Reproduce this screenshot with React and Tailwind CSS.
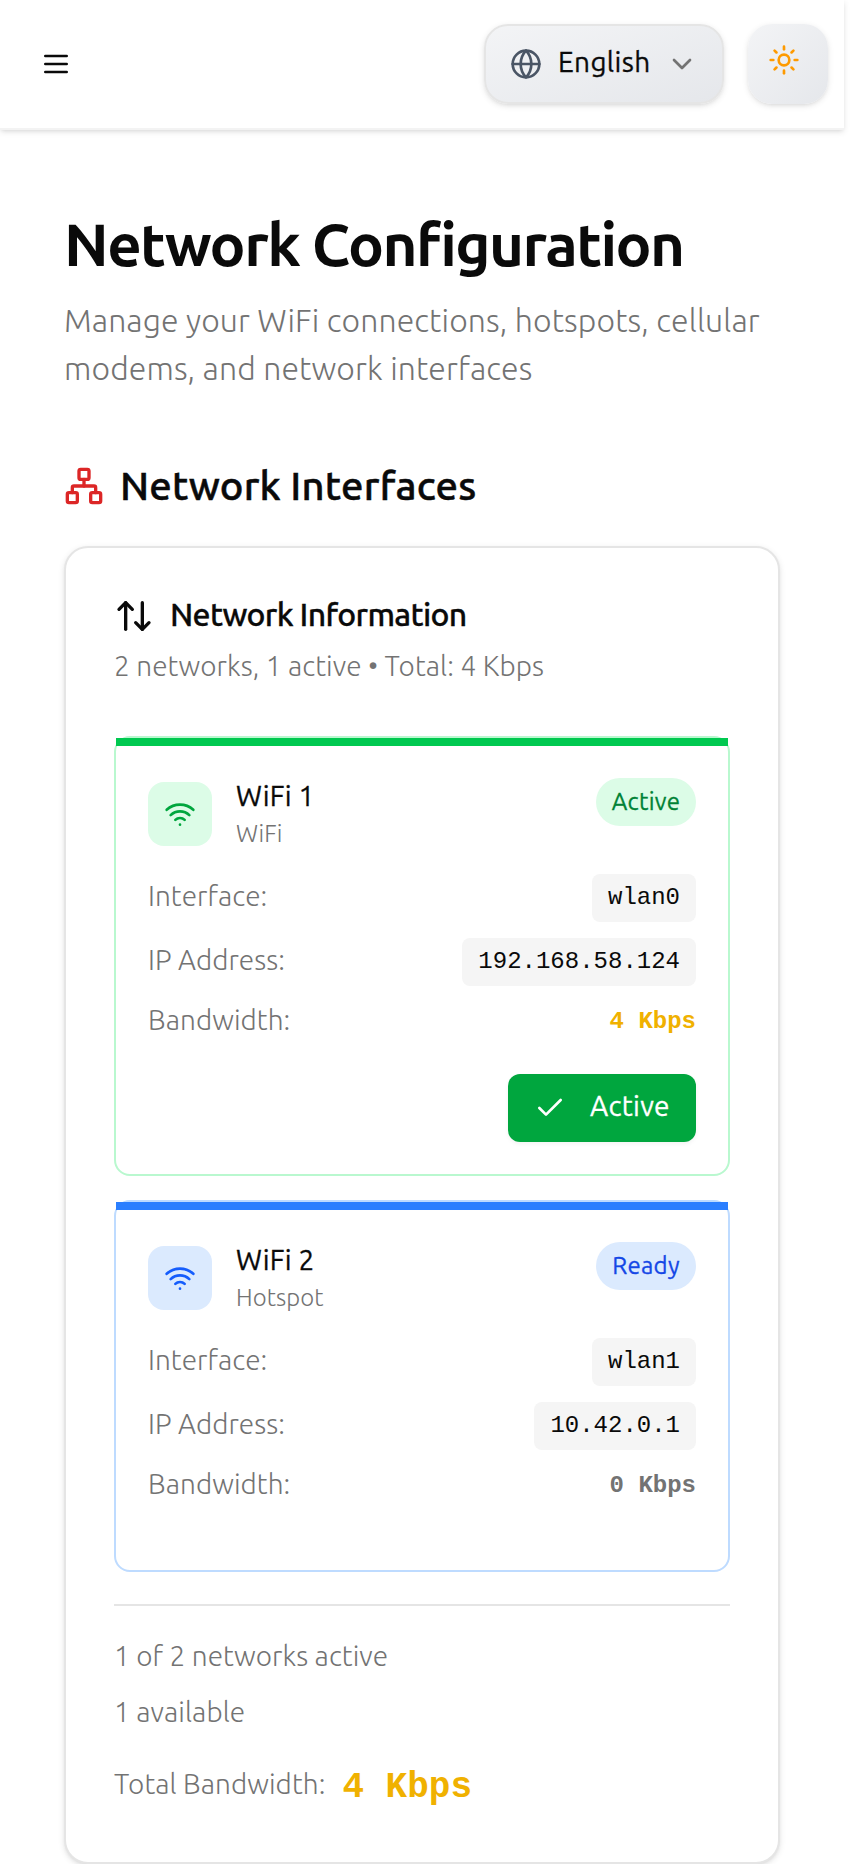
import React from "react";
import { ArrowUpDown, Check, ChevronDown, Globe, Network, Wifi, Sun } from "lucide-react";

function MenuIcon() {
  return (
    <svg className="size-8" viewBox="0 0 24 24" fill="none" stroke="currentColor" strokeWidth="2" strokeLinecap="round">
      <path d="M4 6h16M4 12h16M4 18h16" />
    </svg>
  );
}

const tones = {
  green: {
    border: "border-[#b9f8cf]",
    bar: "bg-[#00c950]",
    tile: "bg-[#dcfce7] text-[#00a63e]",
    badge: "bg-[#dcfce7] text-[#008236]",
    value: "text-[#f0b100]",
  },
  blue: {
    border: "border-[#bedbff]",
    bar: "bg-[#2b7fff]",
    tile: "bg-[#dbeafe] text-[#155dfc]",
    badge: "bg-[#dbeafe] text-[#1447e6]",
    value: "text-[#737373]",
  },
};

function CodeRow({ label, value }) {
  return (
    <div className="flex items-center justify-between">
      <span className="pb-1 leading-9 text-[#737373]">{label}</span>
      <code className="flex h-12 items-center rounded-lg bg-[#f5f5f5] px-4 font-['Liberation_Mono',monospace] text-2xl font-normal leading-8 tracking-normal">
        {value}
      </code>
    </div>
  );
}

function NetworkCard({ tone, name, kind, status, iface, ip, bandwidth, active }) {
  const t = tones[tone];
  return (
    <div className={`rounded-2xl border-2 ${t.border}`}>
      <div className={`h-2 ${t.bar}`} />
      <div className="p-8">
        <div className="flex items-start justify-between">
          <div className="flex items-center gap-6">
            <div className={`flex size-16 items-center justify-center rounded-2xl ${t.tile}`}>
              <Wifi className="size-8" />
            </div>
            <div>
              <h4 className="pb-1 font-normal leading-9 tracking-[0.25px] [-webkit-text-stroke:0.3px]">{name}</h4>
              <p className="text-2xl leading-8 text-[#737373]">{kind}</p>
            </div>
          </div>
          <span className={`flex h-12 w-[100px] items-center justify-center rounded-full text-2xl font-normal tracking-[0.3px] [-webkit-text-stroke:0.3px] ${t.badge}`}>
            {status}
          </span>
        </div>
        <div className="mt-6 flex flex-col gap-4">
          <CodeRow label="Interface:" value={iface} />
          <CodeRow label="IP Address:" value={ip} />
          <div className="flex items-center justify-between">
            <span className="pb-1 leading-9 text-[#737373]">Bandwidth:</span>
            <span className={`font-['Liberation_Mono',monospace] text-2xl font-bold leading-8 tracking-normal ${t.value}`}>{bandwidth}</span>
          </div>
        </div>
        <div className="mt-8 flex justify-end">
          {active && (
            <button className="flex h-[68px] w-[188px] items-center gap-6 rounded-xl bg-[#00a63e] pl-[26px] font-normal tracking-[0.3px] text-white shadow-[0_2px_4px_rgb(0_0_0/0.05)]">
              <Check className="size-8" />
              <span className="pb-1 leading-9 [-webkit-text-stroke:0.3px]">{status}</span>
            </button>
          )}
        </div>
      </div>
    </div>
  );
}

export default function App() {
  return (
    <div className="min-h-[1864px] w-full bg-white font-['Ubuntu','Open_Sans',sans-serif] text-[28px] font-light tracking-[0.06px] text-[#0a0a0a]">
      <div className="w-[844px]">
        <header className="flex h-[130px] items-center justify-between border-b-2 border-[#f3f3f3] bg-white pl-10 pr-4 shadow-[0_2px_6px_rgb(0_0_0/0.1),0_2px_4px_-2px_rgb(0_0_0/0.1)]">
          <button aria-label="Menu">
            <MenuIcon />
          </button>
          <div className="flex gap-6">
            <button className="flex h-20 w-60 items-center gap-4 rounded-3xl border-2 border-[#e5e5e5] bg-linear-to-br from-[#f3f4f6] to-[#e5e7eb] px-6 font-normal tracking-[0.35px] shadow-[0_2px_6px_rgb(0_0_0/0.1),0_2px_4px_-2px_rgb(0_0_0/0.1)]">
              <Globe className="size-8 shrink-0 text-[#4a5565]" />
              <span className="min-w-0 flex-1 pb-1 text-left leading-9 [-webkit-text-stroke:0.3px]">English</span>
              <ChevronDown className="size-8 shrink-0 text-[#737373]" />
            </button>
            <button aria-label="Theme" className="flex size-20 items-start rounded-3xl bg-linear-to-br from-[#f3f4f6] to-[#e5e7eb] pl-5 pt-5 shadow-[0_2px_6px_rgb(0_0_0/0.1),0_2px_4px_-2px_rgb(0_0_0/0.1)]">
              <Sun className="size-8 text-[#fe9a00]" />
            </button>
          </div>
        </header>

        <main className="px-16 pt-[78px]">
          <h1 className="text-[60px] font-bold leading-[72px] tracking-[-1.6px]">Network Configuration</h1>
          <p className="mt-4 text-[32px] leading-12 tracking-[0.1px] text-[#737373]">
            Manage your WiFi connections, hotspots, cellular modems, and network interfaces
          </p>

          <div className="mt-[66px] flex items-center gap-4">
            <Network className="size-10 text-[#dc2626]" />
            <h2 className="text-[40px] font-medium leading-14 tracking-[0.17px] [-webkit-text-stroke:0.5px]">Network Interfaces</h2>
          </div>

          <section className="mt-8 rounded-3xl border-2 border-[#e5e5e5] bg-white p-12 shadow-[0_2px_6px_rgb(0_0_0/0.1),0_2px_4px_-2px_rgb(0_0_0/0.1)]">
            <div className="flex items-center gap-4">
              <ArrowUpDown className="size-10" />
              <h3 className="pb-1 text-[32px] font-medium leading-9 tracking-[-0.7px] [-webkit-text-stroke:0.3px]">Network Information</h3>
            </div>
            <p className="mt-3 pb-1 leading-9 text-[#737373]">2 networks, 1 active • Total: 4 Kbps</p>

            <div className="mt-12 flex flex-col gap-6">
              <NetworkCard tone="green" name="WiFi 1" kind="WiFi" status="Active" iface="wlan0" ip="192.168.58.124" bandwidth="4 Kbps" active />
              <NetworkCard tone="blue" name="WiFi 2" kind="Hotspot" status="Ready" iface="wlan1" ip="10.42.0.1" bandwidth="0 Kbps" />
            </div>

            <div className="mt-8 border-t-2 border-[#e5e5e5] pt-8 text-[#737373]">
              <div className="flex flex-col gap-4 leading-9">
                <span className="pb-1">1 of 2 networks active</span>
                <span className="pb-1">1 available</span>
              </div>
              <div className="mt-6 flex h-14 items-center gap-4">
                <span className="pb-1 leading-9">Total Bandwidth:</span>
                <span className="ml-px pt-1 font-['Liberation_Mono',monospace] text-4xl font-bold leading-[52px] tracking-normal text-[#f0b100]">4 Kbps</span>
              </div>
            </div>
          </section>
        </main>
      </div>
    </div>
  );
}
